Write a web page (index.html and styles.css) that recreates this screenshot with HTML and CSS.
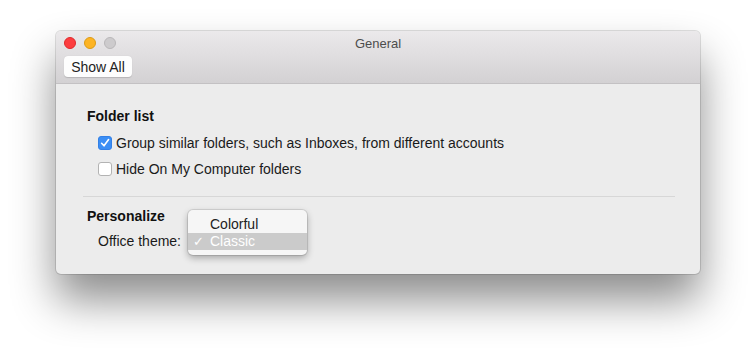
FILE: index.html
```html
<!DOCTYPE html>
<html lang="en">
<head>
  <meta charset="UTF-8" />
  <title>General</title>
  <link rel="stylesheet" href="styles.css">
</head>
<body>
  <div class="window">

    <!-- Barra titolo + toolbar -->
    <div class="titlebar">
      <div class="title-row">
        <div class="lights">
          <span class="light close"></span>
          <span class="light min"></span>
          <span class="light zoom"></span>
        </div>
        <div class="title">General</div>
      </div>
      <div class="toolbar">
        <button class="show-all">Show All</button>
      </div>
    </div>

    <!-- Contenuto -->
    <div class="content">
      <div class="section">
        <div class="heading">Folder list</div>
        <label class="check-row">
          <span class="box checked">
            <svg width="10" height="10" viewBox="0 0 10 10"><path d="M1.6 5.3 L4 7.8 L8.6 1.6" fill="none" stroke="#fff" stroke-width="1.6" stroke-linecap="round" stroke-linejoin="round"/></svg>
          </span>
          Group similar folders, such as Inboxes, from different accounts
        </label>
        <label class="check-row">
          <span class="box"></span>
          Hide On My Computer folders
        </label>
      </div>

      <div class="divider"></div>

      <div class="section personalize">
        <div class="heading">Personalize</div>
        <div class="theme-row">
          <span class="theme-label">Office theme:</span>
          <div class="popup-anchor">
            <div class="popup">
              <div class="item">Colorful</div>
              <div class="item active"><span class="tick">✓</span>Classic</div>
            </div>
          </div>
        </div>
      </div>
    </div>

  </div>
</body>
</html>
```

FILE: styles.css
```css
html, body {
  height: 100%;
}

body {
  margin: 0;
  padding: 31px 0 0 56px;
  box-sizing: border-box;
  background: #fff;
  font-family: 'Liberation Sans', Arial, sans-serif;
  font-size: 14px;
  color: #1a1a1a;
}

.window {
  width: 644px;
  height: 243px;
  display: flex;
  flex-direction: column;
  border-radius: 5px;
  background: #ececec;
  box-shadow: 0 26px 44px rgba(0,0,0,0.45), 0 0 0 1px rgba(0,0,0,0.12);
}

.titlebar {
  height: 53px;
  background: linear-gradient(#ebe9eb, #d3d1d3);
  border-bottom: 1px solid #c3c1c3;
  border-radius: 5px 5px 0 0;
  box-sizing: border-box;
}

.title-row {
  display: flex;
  align-items: center;
  height: 24px;
  padding-left: 8px;
}

.lights {
  display: flex;
  gap: 8px;
}

.light {
  width: 12px;
  height: 12px;
  border-radius: 50%;
  box-sizing: border-box;
}

.light.close { background: #fc3d3f; border: 1px solid #e0292b; }
.light.min { background: #fdb424; border: 1px solid #dd9b15; }
.light.zoom { background: #cdcbcd; border: 1px solid #b9b7b9; }

.title {
  flex: 1;
  text-align: center;
  font-size: 13px;
  color: #4d4d4d;
  margin-right: 60px;
  padding-top: 1px;
}

.toolbar {
  padding: 1px 0 0 8px;
}

.show-all {
  width: 68px;
  height: 21px;
  padding: 0;
  border: none;
  border-radius: 4px;
  background: #fdfdfd;
  box-shadow: 0 0.5px 1px rgba(0,0,0,0.15);
  font-family: inherit;
  font-size: 14px;
  color: #222;
}

.content {
  flex: 1;
  padding: 24px 25px 0 31px;
}

.heading {
  font-weight: bold;
  color: #111;
  height: 17px;
  line-height: 17px;
  margin-bottom: 10px;
}

.check-row {
  display: flex;
  align-items: center;
  gap: 4px;
  margin-left: 11px;
  height: 16px;
  margin-bottom: 10px;
}

.box {
  width: 14px;
  height: 14px;
  box-sizing: border-box;
  border-radius: 3px;
  background: #fff;
  border: 1px solid #b3b3b3;
  display: flex;
  align-items: center;
  justify-content: center;
}

.box.checked {
  background: #3b8ef5;
  border-color: #3380e6;
}

.divider {
  height: 1px;
  background: #d7d7d7;
  margin: 19px 0 0 -4px;
}

.personalize {
  padding-top: 11px;
}

.personalize .heading {
  margin-bottom: 8px;
}

.theme-row {
  display: flex;
  align-items: center;
  margin-left: 11px;
  height: 16px;
}

.theme-label {
  width: 91px;
}

.popup-anchor {
  position: relative;
  width: 119px;
  height: 16px;
}

.popup {
  position: absolute;
  left: -1px;
  top: -23px;
  width: 119px;
  padding: 5px 0 5px;
  box-sizing: border-box;
  height: 45px;
  border-radius: 5px;
  background: #f6f6f6;
  box-shadow: 0 3px 7px rgba(0,0,0,0.3), 0 0 0 1px rgba(0,0,0,0.1);
}

.item {
  height: 18px;
  line-height: 18px;
  padding-left: 22px;
  color: #222;
}

.item.active {
  position: relative;
  height: 17px;
  line-height: 17px;
  background: #cbcbcb;
  color: #fff;
}

.tick {
  position: absolute;
  left: 5px;
  font-family: 'DejaVu Sans', sans-serif;
  font-size: 13px;
}
```
